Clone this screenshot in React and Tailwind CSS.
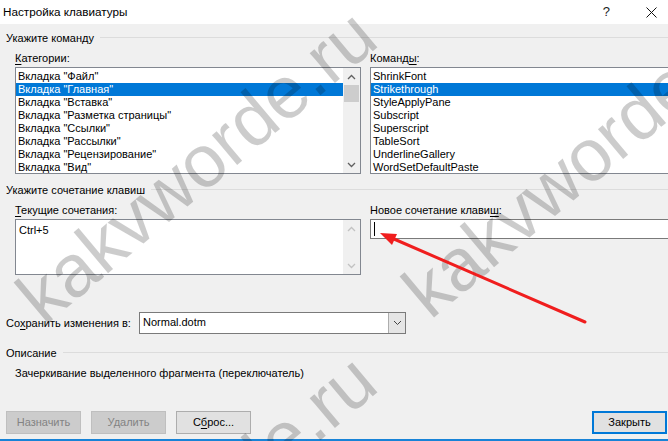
import React from "react";

const categories = [
  'Вкладка "Файл"',
  'Вкладка "Главная"',
  'Вкладка "Вставка"',
  'Вкладка "Разметка страницы"',
  'Вкладка "Ссылки"',
  'Вкладка "Рассылки"',
  'Вкладка "Рецензирование"',
  'Вкладка "Вид"',
];

const commands = [
  "ShrinkFont",
  "Strikethrough",
  "StyleApplyPane",
  "Subscript",
  "Superscript",
  "TableSort",
  "UnderlineGallery",
  "WordSetDefaultPaste",
];

function Chevron({ up, dim }) {
  return (
    <svg width="9" height="6" viewBox="0 0 9 6" className="block">
      <polyline
        points={up ? "1,5 4.5,1.5 8,5" : "1,1 4.5,4.5 8,1"}
        fill="none"
        stroke={dim ? "#c2c2c2" : "#606060"}
        strokeWidth="1.3"
      />
    </svg>
  );
}

function ScrollBar({ thumbClass, dim }) {
  return (
    <div className="flex w-[17px] shrink-0 flex-col bg-[#f0f0f0]">
      <div className="flex h-[17px] items-center justify-center">
        <Chevron up dim={dim} />
      </div>
      <div className="flex-1">
        {thumbClass && <div className={`mx-[1px] h-[17px] bg-[#cdcdcd] ${thumbClass}`} />}
      </div>
      <div className="flex h-[17px] items-center justify-center">
        <Chevron dim={dim} />
      </div>
    </div>
  );
}

function ListBox({ items, selected, thumbClass }) {
  return (
    <div className="flex h-[107px] border border-[#828790] bg-white">
      <ul className="flex-1 pt-[2px]">
        {items.map((t, i) => (
          <li
            key={t}
            className={`h-[13px] whitespace-nowrap pl-[2px] leading-[13px] ${
              i === selected ? "bg-[#0078d7] text-white" : "text-black"
            }`}
          >
            {t}
          </li>
        ))}
      </ul>
      <ScrollBar thumbClass={thumbClass} />
    </div>
  );
}

function GroupTitle({ children }) {
  return (
    <div className="flex items-center gap-[6px] pl-[6px] leading-[16px]">
      <span className="whitespace-nowrap">{children}</span>
      <div className="mt-[-2px] flex-1 border-t border-[#dcdcdc]" />
    </div>
  );
}

function Button({ children, disabled, primary, className = "" }) {
  return (
    <button
      type="button"
      className={`h-[23px] w-[75px] text-center leading-[19px] ${
        primary
          ? "border-2 border-[#0078d7] bg-[#e1e1e1] text-black"
          : disabled
          ? "border border-[#bfbfbf] bg-[#cccccc] text-[#838383]"
          : "border border-[#adadad] bg-[#e1e1e1] text-black"
      } ${className}`}
    >
      {children}
    </button>
  );
}

function Watermark({ className }) {
  return (
    <span
      className={`absolute origin-[0_100%] -rotate-[40deg] whitespace-nowrap font-['Liberation_Sans',Arial,sans-serif] text-[74px] leading-none text-black/20 ${className}`}
    >
      kakvworde.ru
    </span>
  );
}

export default function App() {
  return (
    <div className="relative h-[441px] w-[668px] overflow-hidden bg-[#f0f0f0] font-['Liberation_Sans',Arial,sans-serif] text-[11px] text-black">
      {/* title bar */}
      <div className="flex h-[24px] items-center bg-white pl-[3px]">
        <span className="flex-1 text-[11.7px]">Настройка клавиатуры</span>
        <span className="mr-[36px] text-[13px] text-[#222]">?</span>
        <svg width="11" height="11" viewBox="0 0 11 11" className="mr-[11px]">
          <path d="M0.5 0.5 L10.5 10.5 M10.5 0.5 L0.5 10.5" stroke="#111" strokeWidth="1" />
        </svg>
      </div>

      <div className="pt-[6px]">
        <GroupTitle>Укажите команду</GroupTitle>

        <div className="mt-[4px] grid grid-cols-[346px_346px] gap-x-[9px] pl-[15px]">
          <div>
            <div className="h-[17px] leading-[16px]">
              <span className="underline underline-offset-2">К</span>атегории:
            </div>
            <ListBox items={categories} selected={1} thumbClass="mt-0" />
          </div>
          <div>
            <div className="h-[17px] leading-[16px]">
              Команд<span className="underline underline-offset-2">ы</span>:
            </div>
            <ListBox items={commands} selected={1} thumbClass="mt-[53px]" />
          </div>
        </div>

        <div className="mt-[8px]">
          <GroupTitle>Укажите сочетание клавиш</GroupTitle>
        </div>

        <div className="mt-[4px] grid grid-cols-[346px_346px] gap-x-[9px] pl-[15px]">
          <div>
            <div className="h-[17px] leading-[16px]">
              <span className="underline underline-offset-2">Т</span>екущие сочетания:
            </div>
            <div className="flex h-[56px] border border-[#828790] bg-white">
              <div className="flex-1 pl-[3px] pt-[3px] leading-[14px]">Ctrl+5</div>
              <ScrollBar dim />
            </div>
          </div>
          <div>
            <div className="h-[17px] leading-[16px]">
              Новое сочетание клави<span className="underline underline-offset-2">ш</span>:
            </div>
            <div className="flex h-[20px] items-center border border-[#7a7a7a] bg-white pl-[3px]">
              <div className="h-[14px] w-px bg-black" />
            </div>
          </div>
        </div>

        <div className="mt-[37px] flex items-center pl-[6px]">
          <span className="w-[133px] whitespace-nowrap">
            Со<span className="underline underline-offset-2">х</span>ранить изменения в:
          </span>
          <div className="flex h-[22px] w-[267px] border border-[#7a7a7a] bg-white">
            <span className="flex-1 pl-[3px] leading-[19px]">Normal.dotm</span>
            <div className="flex w-[17px] items-center justify-center border-l border-[#adadad] bg-[#e5e5e5]">
              <svg width="9" height="6" viewBox="0 0 9 6">
                <polyline points="1,1 4.5,4.5 8,1" fill="none" stroke="#444" strokeWidth="1" />
              </svg>
            </div>
          </div>
        </div>

        <div className="mt-[11px]">
          <GroupTitle>Описание</GroupTitle>
        </div>
        <div className="mt-[4px] pl-[15px] leading-[16px]">
          Зачеркивание выделенного фрагмента (переключатель)
        </div>

        <div className="mt-[30px] flex gap-[10px] pl-[6px] pr-[1px]">
          <Button disabled>Назначить</Button>
          <Button disabled>Удалить</Button>
          <Button>
            С<span className="underline underline-offset-2">б</span>рос...
          </Button>
          <Button primary className="ml-auto">
            Закрыть
          </Button>
        </div>
      </div>

      <div className="absolute inset-x-0 bottom-0 h-[2px] bg-[#1883d7]" />

      {/* site watermarks */}
      <Watermark className="left-[52px] top-[262px]" />
      <Watermark className="left-[438px] top-[256px]" />
      <Watermark className="left-[52px] top-[607px]" />

      {/* red pointer to the shortcut field */}
      <svg className="pointer-events-none absolute inset-0" width="668" height="441">
        <line x1="585" y1="322" x2="394" y2="239" stroke="#f01e1e" strokeWidth="3" strokeLinecap="round" />
        <polygon points="380,233 397,234 392,245" fill="#f01e1e" />
      </svg>
    </div>
  );
}
